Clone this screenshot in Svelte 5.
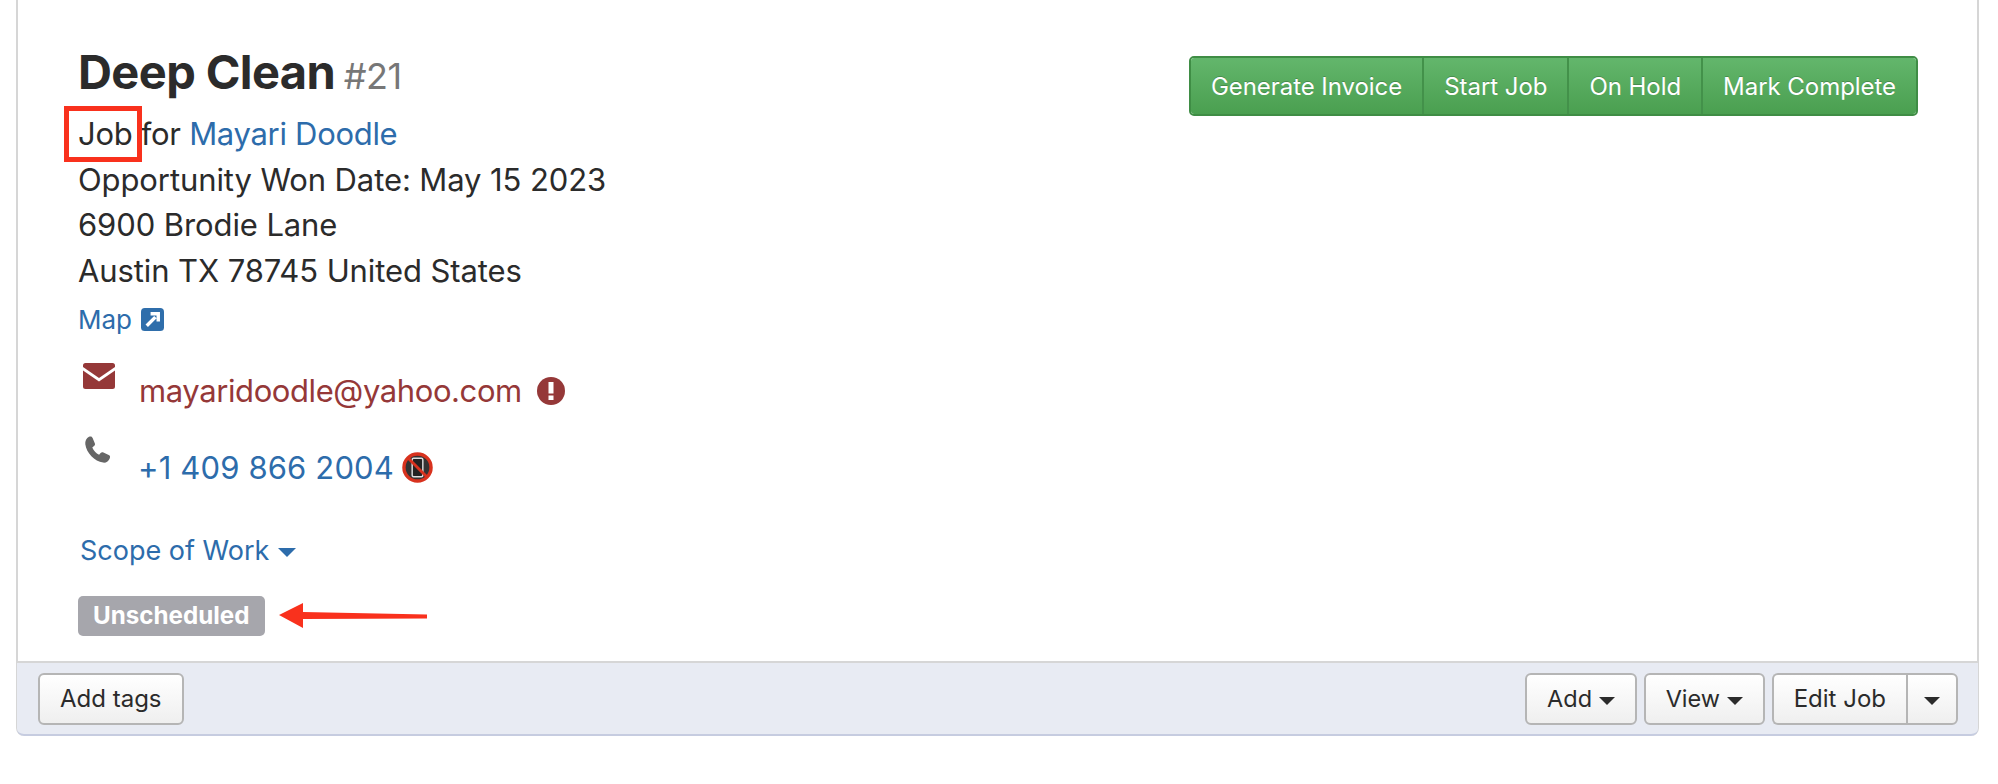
<script>
	const actions = ['Generate Invoice', 'Start Job', 'On Hold', 'Mark Complete'];
	const address = ['Opportunity Won Date: May 15 2023', '6900 Brodie Lane', 'Austin TX 78745 United States'];
</script>

<div class="page">
	<div class="card">
		<div class="body">
			<div class="head">
				<div class="info">
					<h1>Deep Clean <small>#21</small></h1>
					<div class="line first">Job for <a href="#c">Mayari Doodle</a></div>
					{#each address as row}
						<div class="line">{row}</div>
					{/each}
					<a class="map" href="#m">
						Map
						<svg viewBox="0 0 24 24" width="24" height="24">
							<rect width="24" height="24" rx="4" fill="#2f6eab" />
							<path d="M6 18.5 15 9.5M10 6h8v8" fill="none" stroke="#fff" stroke-width="3.6" />
						</svg>
					</a>
				</div>
				<div class="actions">
					{#each actions as label}
						<button class="green">{label}</button>
					{/each}
				</div>
			</div>

			<div class="contact email">
				<svg class="ic" viewBox="0 0 32 26" width="32" height="26">
					<path d="M2.5 0h27A2.5 2.5 0 0 1 32 2.5V4L16 15 0 4V2.5A2.5 2.5 0 0 1 2.5 0z" fill="#953838" />
					<path d="M0 7.5 16 18.5 32 7.5V23.5A2.5 2.5 0 0 1 29.5 26h-27A2.5 2.5 0 0 1 0 23.5z" fill="#953838" />
				</svg>
				<a href="#e">mayaridoodle@yahoo.com</a>
				<svg class="after" viewBox="0 0 28 28" width="28" height="28">
					<circle cx="14" cy="14" r="14" fill="#953838" />
					<rect x="11.5" y="5" width="5" height="11.5" fill="#fff" />
					<rect x="11.5" y="18.5" width="5" height="4.5" fill="#fff" />
				</svg>
			</div>

			<div class="contact phone">
				<svg class="ic" viewBox="0 0 28 28" width="28" height="28">
					<path d="M5 .8C7 0 8 .5 8.600 2l2.200 5.200c.5 1.200.2 2-.8 2.800L8.300 11.400c1.300 3.300 3.700 5.800 6.800 7.400l1.500-1.700c.8-.9 1.700-1.100 2.800-.6l5.300 2.500c1.400.7 1.700 1.600 1.100 3.200-1 2.900-3.700 4.800-6.700 4.400C10.500 25.500 2.500 17 1.300 8.300.9 5.200 2.400 2 5 .8z" fill="#666" />
				</svg>
				<a href="#p">+1 409 866 2004</a>
				<svg class="after" viewBox="0 0 32 32" width="31" height="31">
					<circle cx="16" cy="16" r="14" fill="#333" stroke="#d8321e" stroke-width="3.500" />
					<rect x="10.500" y="6.500" width="11" height="19" rx="1.500" fill="#222" stroke="#ddd" stroke-width="1.500" />
					<path d="M6.500 6.500 25.500 25.500" stroke="#d8321e" stroke-width="3" />
				</svg>
			</div>

			<a class="scope" href="#s">Scope of Work <span class="caret big"></span></a>

			<div class="status">
				<span class="badge">Unscheduled</span>
			</div>
		</div>

		<div class="foot">
			<button class="plain tags">Add tags</button>
			<div class="right">
				<button class="plain">Add <span class="caret"></span></button>
				<button class="plain">View <span class="caret"></span></button>
				<div class="split">
					<button class="plain edit">Edit Job</button>
					<button class="plain more"><span class="caret"></span></button>
				</div>
			</div>
		</div>
	</div>

	<!-- annotations drawn on top of the screenshot -->
	<div class="mark"></div>
	<svg class="arrow" viewBox="0 0 148 28" width="148" height="28">
		<path d="M0 13 24 1V10L148 12.500V16.500L24 17V26z" fill="#f9311d" />
	</svg>
</div>

<style>
	:global(body) {
		margin: 0;
		background: #fff;
		font-family: Inter, 'Noto Sans', sans-serif;
		color: #2b2b2b;
	}
	.page {
		position: relative;
		height: 784px;
		overflow: hidden;
	}
	.card {
		margin: 0 19px 0 16px;
		border: 2px solid #d6d6d6;
		border-top: 0;
		border-bottom: 0;
		border-radius: 0 0 8px 8px;
	}
	.body {
		height: 661px;
		box-sizing: border-box;
		padding: 42px 0 0 60px;
	}
	a {
		color: #2d6cab;
		text-decoration: none;
	}
	.head {
		display: flex;
		justify-content: space-between;
		align-items: flex-start;
		padding-right: 59px;
	}
	h1 {
		margin: 0 0 5px;
		font-size: 47px;
		line-height: 60px;
		font-weight: 700;
		letter-spacing: -0.6px;
		white-space: nowrap;
	}
	h1 small {
		margin-left: -2px;
		font-size: 36px;
		font-weight: 400;
		color: #777;
		letter-spacing: -0.5px;
	}
	.line {
		font-size: 31px;
		line-height: 45.7px;
		letter-spacing: -0.1px;
	}
	.line.first {
		letter-spacing: -0.3px;
	}
	.map {
		display: flex;
		align-items: center;
		gap: 9px;
		margin-top: 4px;
		font-size: 26px;
		line-height: 44px;
	}
	.map svg {
		width: 23px;
		height: 23px;
	}
	.actions {
		display: flex;
		margin-top: 14px;
		border-radius: 5px;
		overflow: hidden;
		border: 2px solid #3f8d45;
	}
	.green {
		height: 56px;
		padding: 0 20px;
		border: 0;
		border-left: 2px solid #43914a;
		background: linear-gradient(#63b66c, #4a9f50);
		color: #fff;
		font: 24px Inter, sans-serif;
		letter-spacing: -0.05px;
		text-shadow: 0 -1px 0 rgba(0, 0, 0, 0.2);
	}
	.green:first-child {
		border-left: 0;
	}
	.contact {
		display: flex;
		align-items: center;
		line-height: 46px;
		position: relative;
		padding-left: 61px;
	}
	.email {
		margin-top: 26px;
		font-size: 31px;
		letter-spacing: -0.4px;
	}
	.email a {
		color: #953838;
	}
	.phone {
		margin-top: 31px;
		padding-left: 60px;
		font-size: 31px;
		letter-spacing: 0.15px;
	}
	.ic {
		position: absolute;
		left: 5px;
		top: -5px;
	}
	.phone .ic {
		left: 6px;
		top: -9px;
	}
	.after {
		margin-left: 15px;
	}
	.phone .after {
		margin-left: 8px;
	}
	.scope {
		display: block;
		margin: 38px 0 0 2px;
		font-size: 27px;
		line-height: 44px;
	}
	.caret {
		display: inline-block;
		border-left: 8px solid transparent;
		border-right: 8px solid transparent;
		border-top: 8px solid #2b2b2b;
		vertical-align: middle;
	}
	.caret.big {
		border-left-width: 9px;
		border-right-width: 9px;
		border-top: 9px solid #2d6cab;
		margin-left: 1px;
	}
	.status {
		margin-top: 23px;
	}
	.badge {
		display: inline-block;
		height: 40px;
		padding: 0 15px;
		border-radius: 5px;
		background: #a6a6ac;
		color: #fff;
		font-size: 24.2px;
		font-weight: 700;
		line-height: 40px;
	}
	.foot {
		display: flex;
		justify-content: space-between;
		align-items: center;
		height: 75px;
		box-sizing: border-box;
		padding: 0 20px 0 21px;
		background: #e8ebf3;
		border-top: 2px solid #d6d6d6;
		border-bottom: 2px solid #c6cce0;
		border-radius: 0 0 7px 7px;
		margin: 0 -1px;
	}
	.right {
		display: flex;
		gap: 7px;
	}
	.plain {
		height: 52px;
		padding: 0 20px;
		border: 2px solid #b5b5b5;
		border-radius: 6px;
		background: linear-gradient(#fff, #efefef);
		color: #2b2b2b;
		font: 23.5px Inter, sans-serif;
		white-space: nowrap;
	}
	.tags {
		font-size: 24px;
	}
	.split {
		display: flex;
	}
	.edit {
		border-radius: 6px 0 0 6px;
		border-right: 0;
		font-size: 24px;
	}
	.more {
		padding: 0 16px;
		border-radius: 0 6px 6px 0;
	}
	.mark {
		position: absolute;
		left: 64px;
		top: 106px;
		width: 78px;
		height: 56px;
		box-sizing: border-box;
		border: 5px solid #f9311d;
	}
	.arrow {
		position: absolute;
		left: 279px;
		top: 602px;
	}
</style>
